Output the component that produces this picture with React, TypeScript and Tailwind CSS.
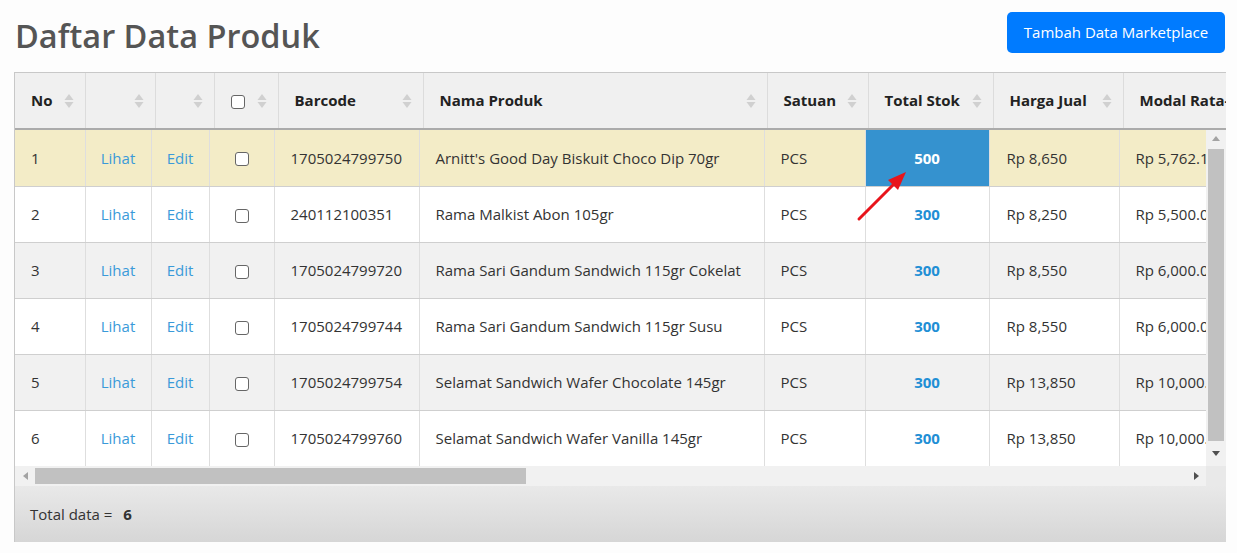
import React from 'react';

type Produk = {
  no: number;
  barcode: string;
  nama: string;
  satuan: string;
  stok: number;
  harga: string;
  modal: string;
};

const produk: Produk[] = [
  { no: 1, barcode: '1705024799750', nama: "Arnitt's Good Day Biskuit Choco Dip 70gr", satuan: 'PCS', stok: 500, harga: 'Rp 8,650', modal: 'Rp 5,762.17' },
  { no: 2, barcode: '240112100351', nama: 'Rama Malkist Abon 105gr', satuan: 'PCS', stok: 300, harga: 'Rp 8,250', modal: 'Rp 5,500.00' },
  { no: 3, barcode: '1705024799720', nama: 'Rama Sari Gandum Sandwich 115gr Cokelat', satuan: 'PCS', stok: 300, harga: 'Rp 8,550', modal: 'Rp 6,000.00' },
  { no: 4, barcode: '1705024799744', nama: 'Rama Sari Gandum Sandwich 115gr Susu', satuan: 'PCS', stok: 300, harga: 'Rp 8,550', modal: 'Rp 6,000.00' },
  { no: 5, barcode: '1705024799754', nama: 'Selamat Sandwich Wafer Chocolate 145gr', satuan: 'PCS', stok: 300, harga: 'Rp 13,850', modal: 'Rp 10,000.00' },
  { no: 6, barcode: '1705024799760', nama: 'Selamat Sandwich Wafer Vanilla 145gr', satuan: 'PCS', stok: 300, harga: 'Rp 13,850', modal: 'Rp 10,000.00' },
];

// header and body are two tables, their columns don't line up exactly
const headWidths = [70, 70, 59, 64, 145, 344, 101, 125, 130, 200];
const bodyWidths = [70, 66, 58, 65, 145, 345, 101, 124, 130, 200];

function SortIcon() {
  return (
    <svg width="10" height="16" viewBox="0 0 10 16" className="absolute right-[11px] top-1/2 -translate-y-1/2">
      <path d="M5 1 L9.5 7 L0.5 7 Z" fill="#d0d0d0" />
      <path d="M5 15 L9.5 9 L0.5 9 Z" fill="#d0d0d0" />
    </svg>
  );
}

function Checkbox() {
  return <span className="inline-block w-[14px] h-[14px] rounded-[3px] border border-[#666] bg-white align-middle" />;
}

function Th({ children }: { children?: React.ReactNode }) {
  return (
    <th className="relative h-[55px] border-r border-[#dcdcdc] px-[16px] text-left text-[15px] font-bold text-[#222] whitespace-nowrap">
      {children}
      <SortIcon />
    </th>
  );
}

function App() {
  return (
    <div className="min-h-screen bg-[#fdfdfd] font-['Open_Sans',sans-serif] text-[#333]">
      <div className="pl-[14px] pt-[12px]">
        <div className="flex items-start justify-between h-[60px] pr-[12px]">
          <h1 className="mt-[3px] ml-[1px] text-[32.5px] leading-[42px] font-semibold text-[#555]">Daftar Data Produk</h1>
          <button className="h-[41px] w-[218px] rounded-[5px] bg-[#007bff] text-[15px] text-white">Tambah Data Marketplace</button>
        </div>

        <div className="w-[1212px] border-l border-[#c8c8c8]">
          <div className="overflow-hidden border-t border-[#c8c8c8] bg-[#f0f0f0] border-b-2 border-b-[#ababab]">
            <table className="table-fixed border-collapse w-[1308px]">
              <colgroup>
                {headWidths.map((w, i) => (
                  <col key={i} style={{ width: w }} />
                ))}
              </colgroup>
              <thead>
                <tr>
                  <Th>No</Th>
                  <Th />
                  <Th />
                  <th className="relative h-[55px] border-r border-[#dcdcdc] pl-[16px] text-left">
                    <Checkbox />
                    <SortIcon />
                  </th>
                  <Th>Barcode</Th>
                  <Th>Nama Produk</Th>
                  <Th>Satuan</Th>
                  <Th>Total Stok</Th>
                  <Th>Harga Jual</Th>
                  <Th>Modal Rata-rata</Th>
                </tr>
              </thead>
            </table>
          </div>

          <div className="flex">
            <div className="w-[1192px] h-[336px] overflow-hidden">
              <table className="table-fixed border-collapse w-[1304px] text-[15px]">
                <colgroup>
                  {bodyWidths.map((w, i) => (
                    <col key={i} style={{ width: w }} />
                  ))}
                </colgroup>
                <tbody>
                  {produk.map((p, i) => {
                    const bg = i === 0 ? 'bg-[#f3ecc7]' : i % 2 === 1 ? 'bg-white' : 'bg-[#f1f1f1]';
                    const td = 'h-[56px] border-r border-b border-r-[#dedede] border-b-[#cfcfcf] whitespace-nowrap';
                    return (
                      <tr key={p.no} className={bg}>
                        <td className={`${td} pl-[16px]`}>{p.no}</td>
                        <td className={`${td} text-center text-[#3a9ad9]`}>Lihat</td>
                        <td className={`${td} text-center text-[#3a9ad9]`}>Edit</td>
                        <td className={`${td} text-center`}>
                          <Checkbox />
                        </td>
                        <td className={`${td} pl-[16px]`}>{p.barcode}</td>
                        <td className={`${td} pl-[16px]`}>{p.nama}</td>
                        <td className={`${td} pl-[16px]`}>{p.satuan}</td>
                        <td
                          className={`${td} text-center font-bold ${i === 0 ? 'bg-[#3592cf] text-white' : 'text-[#1f8fd5]'}`}
                        >
                          {p.stok}
                        </td>
                        <td className={`${td} pl-[17px]`}>{p.harga}</td>
                        <td className={`${td} pl-[16px]`}>{p.modal}</td>
                      </tr>
                    );
                  })}
                </tbody>
              </table>
            </div>
            <div className="w-[20px] h-[336px] bg-[#f1f1f1] flex flex-col items-center">
              <div className="h-[17px] flex items-center justify-center">
                <svg width="8" height="5" viewBox="0 0 8 5">
                  <path d="M4 0 L8 5 L0 5 Z" fill="#a3a3a3" />
                </svg>
              </div>
              <div className="w-[16px] h-[292px] mt-[2px] bg-[#c1c1c1]" />
              <div className="flex-1 flex items-center justify-center">
                <svg width="8" height="5" viewBox="0 0 8 5">
                  <path d="M0 0 L8 0 L4 5 Z" fill="#505050" />
                </svg>
              </div>
            </div>
          </div>

          <div className="flex h-[20px] bg-[#f1f1f1]">
            <div className="w-[1192px] flex items-center">
              <div className="w-[20px] flex items-center justify-center">
                <svg width="5" height="8" viewBox="0 0 5 8">
                  <path d="M5 0 L5 8 L0 4 Z" fill="#a3a3a3" />
                </svg>
              </div>
              <div className="h-[16px] w-[491px] bg-[#c1c1c1]" />
              <div className="flex-1" />
              <div className="w-[20px] flex items-center justify-center">
                <svg width="5" height="8" viewBox="0 0 5 8">
                  <path d="M0 0 L5 4 L0 8 Z" fill="#505050" />
                </svg>
              </div>
            </div>
            <div className="w-[20px] bg-[#e9e9e9]" />
          </div>

          <div className="h-[56px] flex items-center pl-[15px] bg-gradient-to-b from-[#e9e9e9] to-[#d6d6d6] text-[15px]">
            Total data =<span className="ml-[11px] font-bold">6</span>
          </div>
        </div>
      </div>

      <svg className="absolute left-[855px] top-[165px] pointer-events-none" width="60" height="60" viewBox="0 0 60 60">
        <line x1="4" y1="54" x2="42" y2="16" stroke="#e8141b" strokeWidth="3" strokeLinecap="round" />
        <path d="M51 7 L33 15 L43 25 Z" fill="#e8141b" />
      </svg>
    </div>
  );
}

export default App;
